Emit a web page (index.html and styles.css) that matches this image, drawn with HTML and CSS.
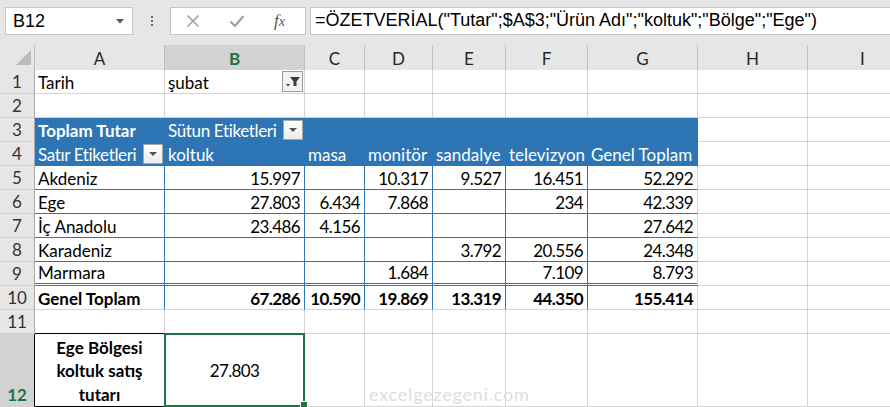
FILE: index.html
```html
<!DOCTYPE html>
<html lang="tr">
  <head>
    <meta charset="UTF-8" />
    <title>ÖZETVERİAL</title>
    <link rel="stylesheet" href="styles.css">
  </head>
  <body>
    <!-- formül çubuğu -->
    <div class="toolbar">
      <div class="namebox">
        <span>B12</span>
        <svg class="caret" width="8" height="5" viewBox="0 0 8 5"><polygon points="0,0 8,0 4,4.5" fill="#595959"/></svg>
      </div>
      <div class="dots"><i></i><i></i><i></i></div>
      <div class="fxbox">
        <svg width="14" height="14" viewBox="0 0 14 14"><path d="M1.5 1.5 L12.5 12.5 M12.5 1.5 L1.5 12.5" stroke="#a0a0a0" stroke-width="1.6" fill="none"/></svg>
        <svg width="16" height="14" viewBox="0 0 16 14"><path d="M1.5 7.5 L6 12 L14.5 2" stroke="#a0a0a0" stroke-width="2.2" fill="none"/></svg>
        <span class="fx">f<small>x</small></span>
      </div>
      <div class="formula">=ÖZETVERİAL("Tutar";$A$3;"Ürün Adı";"koltuk";"Bölge";"Ege")</div>
    </div>

    <!-- çalışma sayfası -->
    <div class="sheet">
      <div class="row hdr">
        <div class="corner"><svg width="35" height="24" viewBox="0 0 35 24"><polygon points="16,20 31,20 31,5" fill="#bcbcbc"/></svg></div>
        <div class="ch">A</div>
        <div class="ch on">B</div>
        <div class="ch">C</div>
        <div class="ch">D</div>
        <div class="ch">E</div>
        <div class="ch">F</div>
        <div class="ch">G</div>
        <div class="ch">H</div>
        <div class="ch">I</div>
      </div>

      <div class="row">
        <div class="rh">1</div>
        <div class="c">Tarih</div>
        <div class="c split">şubat
          <span class="filter"><svg width="18" height="14" viewBox="0 0 18 14"><polygon points="6,2 16,2 12.5,6.5 12.5,11 9.5,11 9.5,6.5" fill="#3c3c3c"/><polygon points="2,9 6,9 4,11.5" fill="#3c3c3c"/></svg></span>
        </div>
        <div class="c"></div><div class="c"></div><div class="c"></div><div class="c"></div><div class="c"></div><div class="c"></div><div class="c"></div>
      </div>

      <div class="row">
        <div class="rh">2</div>
        <div class="c"></div><div class="c"></div><div class="c"></div><div class="c"></div><div class="c"></div><div class="c"></div><div class="c"></div><div class="c"></div><div class="c"></div>
      </div>

      <div class="row">
        <div class="rh">3</div>
        <div class="c ph b">Toplam Tutar</div>
        <div class="c ph split"><span class="tight">Sütun Etiketleri</span> <span class="dd"></span></div>
        <div class="c ph"></div><div class="c ph"></div><div class="c ph"></div><div class="c ph"></div><div class="c ph"></div>
        <div class="c"></div><div class="c"></div>
      </div>

      <div class="row">
        <div class="rh">4</div>
        <div class="c ph split"><span class="tight">Satır Etiketleri</span> <span class="dd"></span></div>
        <div class="c ph">koltuk</div>
        <div class="c ph">masa</div>
        <div class="c ph">monitör</div>
        <div class="c ph">sandalye</div>
        <div class="c ph">televizyon</div>
        <div class="c ph">Genel Toplam</div>
        <div class="c"></div><div class="c"></div>
      </div>

      <div class="row">
        <div class="rh">5</div>
        <div class="c pb">Akdeniz</div>
        <div class="c pb num">15.997</div>
        <div class="c pb num"></div>
        <div class="c pb num">10.317</div>
        <div class="c pb num">9.527</div>
        <div class="c pb num">16.451</div>
        <div class="c pb num last">52.292</div>
        <div class="c"></div><div class="c"></div>
      </div>

      <div class="row">
        <div class="rh">6</div>
        <div class="c pb">Ege</div>
        <div class="c pb num">27.803</div>
        <div class="c pb num">6.434</div>
        <div class="c pb num">7.868</div>
        <div class="c pb num"></div>
        <div class="c pb num">234</div>
        <div class="c pb num last">42.339</div>
        <div class="c"></div><div class="c"></div>
      </div>

      <div class="row">
        <div class="rh">7</div>
        <div class="c pb">İç Anadolu</div>
        <div class="c pb num">23.486</div>
        <div class="c pb num">4.156</div>
        <div class="c pb num"></div>
        <div class="c pb num"></div>
        <div class="c pb num"></div>
        <div class="c pb num last">27.642</div>
        <div class="c"></div><div class="c"></div>
      </div>

      <div class="row">
        <div class="rh">8</div>
        <div class="c pb">Karadeniz</div>
        <div class="c pb num"></div>
        <div class="c pb num"></div>
        <div class="c pb num"></div>
        <div class="c pb num">3.792</div>
        <div class="c pb num">20.556</div>
        <div class="c pb num last">24.348</div>
        <div class="c"></div><div class="c"></div>
      </div>

      <div class="row">
        <div class="rh">9</div>
        <div class="c pb dbl">Marmara</div>
        <div class="c pb dbl num"></div>
        <div class="c pb dbl num"></div>
        <div class="c pb dbl num">1.684</div>
        <div class="c pb dbl num"></div>
        <div class="c pb dbl num">7.109</div>
        <div class="c pb dbl num last">8.793</div>
        <div class="c"></div><div class="c"></div>
      </div>

      <div class="row">
        <div class="rh">10</div>
        <div class="c pt b">Genel Toplam</div>
        <div class="c pt b num">67.286</div>
        <div class="c pt b num">10.590</div>
        <div class="c pt b num">19.869</div>
        <div class="c pt b num">13.319</div>
        <div class="c pt b num">44.350</div>
        <div class="c b num">155.414</div>
        <div class="c"></div><div class="c"></div>
      </div>

      <div class="row">
        <div class="rh">11</div>
        <div class="c boxtop"></div><div class="c"></div><div class="c"></div><div class="c"></div><div class="c"></div><div class="c"></div><div class="c"></div><div class="c"></div><div class="c"></div>
      </div>

      <div class="row tall">
        <div class="rh on">12</div>
        <div class="c label b">Ege Bölgesi<br>koltuk satış<br>tutarı</div>
        <div class="c sel">27.803</div>
        <div class="c"></div><div class="c"></div><div class="c"></div><div class="c"></div><div class="c"></div><div class="c"></div><div class="c"></div>
      </div>

      <span class="watermark">excelgezegeni.com</span>
    </div>
  </body>
</html>
```

FILE: styles.css
```css
* {
  box-sizing: border-box;
}

body {
  margin: 0;
  width: 890px;
  height: 407px;
  overflow: hidden;
  background: #e6e6e6;
  font-family: Lato, "Liberation Sans", sans-serif;
  position: relative;
}

/* formül çubuğu */
.toolbar {
  height: 45px;
  display: flex;
  align-items: flex-start;
  padding: 7px 0 0 5px;
}
.namebox {
  width: 128px;
  height: 28px;
  background: #fff;
  border: 1px solid #c6c6c6;
  display: flex;
  align-items: center;
  justify-content: space-between;
  padding: 0 8px 0 7px;
  font: 18px "Liberation Sans", sans-serif;
  color: #000;
}
.dots {
  width: 37px;
  height: 28px;
  display: flex;
  flex-direction: column;
  align-items: center;
  justify-content: center;
  gap: 2px;
}
.dots i {
  width: 2px;
  height: 2px;
  background: #6a6a6a;
}
.fxbox {
  width: 136px;
  height: 28px;
  background: #fff;
  border: 1px solid #c6c6c6;
  display: flex;
  align-items: center;
  gap: 29px;
  padding-left: 15px;
}
.fx {
  font: italic 17px "Liberation Serif", serif;
  color: #555;
}
.fx small {
  font-size: 14px;
}
.formula {
  flex: 1;
  height: 28px;
  margin-left: 4px;
  background: #fff;
  border: 1px solid #c6c6c6;
  border-right: none;
  padding: 2px 0 0 4px;
  font: 18px "Liberation Sans", sans-serif;
  white-space: nowrap;
  color: #000;
}

/* tablo */
.sheet {
  position: relative;
}
.row {
  display: grid;
  grid-template-columns: 35px 130px 140px 60px 68px 73px 82px 110px 110px 110px;
  height: 24px;
}
.row.hdr {
  height: 25px;
}
.row.tall {
  height: 73px;
}

.corner {
  border-right: 1px solid #c0c0c0;
  border-bottom: 1px solid #a0a0a0;
}
.ch {
  display: flex;
  align-items: center;
  justify-content: center;
  font-size: 17px;
  color: #262626;
  border-right: 1px solid #c0c0c0;
  border-bottom: 1px solid #a0a0a0;
}
.ch.on {
  background: #d2d2d2;
  color: #217346;
  font-weight: bold;
  border-bottom: 2px solid #217346;
}

.rh {
  display: flex;
  align-items: flex-end;
  justify-content: center;
  padding-bottom: 1px;
  font-size: 17px;
  line-height: 20px;
  color: #333;
  background: #e6e6e6;
  border-right: 1px solid #a8a8a8;
  border-bottom: 1px solid #d0d0d0;
}
.rh.on {
  background: #d2d2d2;
  color: #217346;
  font-weight: bold;
  border-right-color: #000;
}

.c {
  display: flex;
  align-items: flex-end;
  padding: 0 3px 0;
  font-size: 17px;
  line-height: 21px;
  white-space: nowrap;
  overflow: hidden;
  background: #fff;
  color: #000;
  border-right: 1px solid #d4d4d4;
  border-bottom: 1px solid #d4d4d4;
}
.c.b {
  font-weight: bold;
}
.c.num {
  justify-content: flex-end;
  letter-spacing: -0.6px;
  padding-right: 4px;
}
.c.split {
  justify-content: space-between;
  padding-right: 1px;
}
.tight {
  letter-spacing: -0.35px;
}

/* özet tablo */
.c.ph {
  background: #2e75b6;
  color: #fff;
  border-color: #2e75b6;
}
.c.pb,
.c.pt {
  border-right-color: #2e75b6;
  border-bottom-color: #2e75b6;
}
.c.pt {
  border-bottom-color: #d4d4d4;
}
.c.last {
  border-right-color: #d4d4d4;
}
.c.dbl {
  border-bottom: 3px double #2e75b6;
}

.dd {
  align-self: center;
  flex: none;
  width: 20px;
  height: 20px;
  background: linear-gradient(#fdfdfd, #ececec);
  border: 1px solid #a6a6a6;
  position: relative;
}
.dd::after {
  content: "";
  position: absolute;
  left: 5px;
  top: 7px;
  border-left: 4px solid transparent;
  border-right: 4px solid transparent;
  border-top: 4px solid #555;
}
.filter {
  align-self: center;
  flex: none;
  width: 21px;
  height: 21px;
  background: #f2f2f2;
  border: 1px solid #9a9a9a;
  display: flex;
  align-items: center;
  justify-content: center;
}

/* satır 12 */
.c.boxtop {
  border-bottom-color: #000;
}
.c.label {
  white-space: normal;
  text-align: center;
  justify-content: center;
  align-items: center;
  line-height: 23.5px;
  padding: 2px 0 0;
  border-right-color: #000;
  border-bottom-color: #000;
}
.c.sel {
  position: relative;
  overflow: visible;
  justify-content: center;
  align-items: center;
  letter-spacing: -0.6px;
}
.c.sel::after {
  content: "";
  position: absolute;
  left: -1px;
  top: -1px;
  right: -1px;
  bottom: -1px;
  border: 2px solid #217346;
}
.c.sel::before {
  content: "";
  position: absolute;
  right: -4px;
  bottom: -3px;
  width: 6px;
  height: 6px;
  background: #217346;
  border: 1px solid #fff;
  z-index: 1;
}

.watermark {
  position: absolute;
  left: 369px;
  top: 338px;
  font-size: 18px;
  letter-spacing: 0.8px;
  color: #dedede;
}
```
